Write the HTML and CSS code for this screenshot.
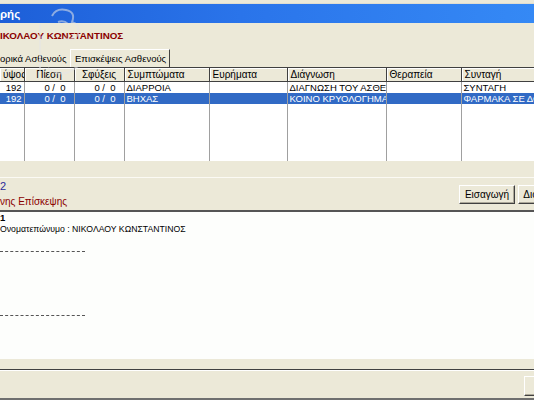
FILE: index.html
```html
<!DOCTYPE html>
<html lang="el">
<head>
<meta charset="utf-8">
<title>Επισκέψεις Ασθενούς</title>
<link rel="stylesheet" href="styles.css">
</head>
<body>
<div class="window">
  <div class="titlebar"><span class="title">ρής</span></div>
  <div class="top">
    <div class="patient">ΙΚΟΛΑΟΥ ΚΩΝΣΤΑΝΤΙΝΟΣ</div>
    <div class="tabs">
      <div class="tab">ορικά Ασθενούς</div>
      <div class="tab active">Επισκέψεις Ασθενούς</div>
    </div>
  </div>
  <div class="grid">
    <table class="visits">
      <colgroup>
        <col class="c1"><col class="c2"><col class="c3"><col class="c4"><col class="c5"><col class="c6"><col class="c7"><col class="c8">
      </colgroup>
      <thead>
        <tr>
          <th class="right">ύψος</th>
          <th class="center">Πίεση</th>
          <th class="center">Σφύξεις</th>
          <th>Συμπτώματα</th>
          <th>Ευρήματα</th>
          <th>Διάγνωση</th>
          <th>Θεραπεία</th>
          <th>Συνταγή</th>
        </tr>
      </thead>
      <tbody>
        <tr>
          <td class="right">192</td>
          <td class="num">0 /&nbsp; 0</td>
          <td class="num">0 /&nbsp; 0</td>
          <td>ΔΙΑΡΡΟΙΑ</td>
          <td></td>
          <td>ΔΙΑΓΝΩΣΗ ΤΟΥ ΑΣΘΕΝΟΥΣ</td>
          <td></td>
          <td>ΣΥΝΤΑΓΗ</td>
        </tr>
        <tr class="selected">
          <td class="right">192</td>
          <td class="num">0 /&nbsp; 0</td>
          <td class="num">0 /&nbsp; 0</td>
          <td>ΒΗΧΑΣ</td>
          <td></td>
          <td>ΚΟΙΝΟ ΚΡΥΟΛΟΓΗΜΑ</td>
          <td></td>
          <td>ΦΑΡΜΑΚΑ ΣΕ ΔΟΣΕΙΣ</td>
        </tr>
        <tr class="filler">
          <td></td><td></td><td></td><td></td><td></td><td></td><td></td><td></td>
        </tr>
      </tbody>
    </table>
  </div>
  <div class="lower">
    <div class="lower-inner">
      <div class="labels">
        <div class="count">2</div>
        <div class="caption">νης Επίσκεψης</div>
      </div>
      <div class="buttons">
        <button class="btn">Εισαγωγή</button>
        <button class="btn">Διόρθωση</button>
      </div>
    </div>
  </div>
  <div class="report">
    <div class="r-bold">1</div>
    <div class="r-line">Ονοματεπώνυμο : ΝΙΚΟΛΑΟΥ ΚΩΝΣΤΑΝΤΙΝΟΣ</div>
    <div class="dots first"></div>
    <div class="dots second"></div>
  </div>
  <div class="footer">
    <div class="footer-inner">
      <button class="btn small"></button>
    </div>
  </div>
  <svg class="watermark" width="60" height="80" viewBox="0 0 60 80">
    <path d="M6 22 L6 70" />
    <path d="M14 66 Q28 78 44 64" />
    <path d="M18 14 Q22 6 32 8 Q42 10 38 20 Q46 22 44 32 Q40 40 30 36" />
    <path d="M24 20 Q30 18 34 22" />
  </svg>
</div>
</body>
</html>
```

FILE: styles.css
```css
html, body {
  margin: 0;
  padding: 0;
}
body {
  width: 534px;
  height: 400px;
  overflow: hidden;
  background: #ece9d8;
  font-family: "Liberation Sans", Arial, sans-serif;
  font-size: 9.5px;
  color: #000;
}
.window {
  position: relative;
  width: 534px;
  height: 400px;
  display: flex;
  flex-direction: column;
  overflow: hidden;
}
.titlebar {
  margin-top: 3px;
  height: 20px;
  background: linear-gradient(to right, #1d5fd8 0%, #2a74ea 45%, #3589f5 100%);
  border-top: 1px solid #e0ddd0;
  box-sizing: border-box;
  display: flex;
  align-items: center;
}
.title {
  color: #fff;
  font-weight: bold;
  font-size: 11.5px;
}
.top {
  height: 44px;
  display: flex;
  flex-direction: column;
  justify-content: space-between;
}
.patient {
  margin-top: 7px;
  color: #8b0000;
  font-weight: bold;
  font-size: 9.8px;
  white-space: nowrap;
}
.tabs {
  display: flex;
  align-items: flex-end;
  height: 18px;
}
.tab {
  flex: none;
  height: 16px;
  line-height: 16px;
  width: 70px;
  white-space: nowrap;
  color: #000;
}
.tab.active {
  height: 18px;
  line-height: 17px;
  width: 100px;
  padding-left: 4px;
  border-left: 1px solid #fff;
  border-top: 1px solid #fff;
  border-right: 1px solid #404040;
  box-sizing: border-box;
}
.grid {
  height: 95px;
  background: #fff;
  border-top: 1px solid #404040;
  border-bottom: 1px solid #ece9d8;
  box-sizing: border-box;
  overflow: hidden;
}
.visits {
  width: 534px;
  table-layout: fixed;
  border-collapse: collapse;
  height: 94px;
}
.c1 { width: 24px; }
.c2 { width: 50px; }
.c3 { width: 50px; }
.c4 { width: 85px; }
.c5 { width: 78px; }
.c6 { width: 99px; }
.c7 { width: 75px; }
.c8 { width: 73px; }
.visits th {
  height: 13px;
  padding: 0 3px;
  font-weight: normal;
  font-size: 10px;
  text-align: left;
  background: #ece9d8;
  border-right: 1px solid #404040;
  border-bottom: 1px solid #404040;
  box-shadow: inset 1px 1px 0 #fff;
  white-space: nowrap;
  overflow: hidden;
  line-height: 12px;
}
.visits td {
  height: 11px;
  padding: 0 2px;
  line-height: 11px;
  white-space: nowrap;
  overflow: hidden;
  border-right: 1px solid #a0a0a0;
  vertical-align: middle;
}
.visits .filler td {
  height: auto;
}
.visits .right { text-align: right; }
.visits .center { text-align: center; }
.visits .num { text-align: right; padding-right: 8px; }
.visits tr.selected td {
  background: #316ac5;
  color: #fff;
}
.lower {
  height: 50px;
  padding-top: 15px;
  box-sizing: border-box;
  border-bottom: 2px solid #555;
}
.lower-inner {
  border-top: 1px solid #fbfaf4;
  height: 33px;
  display: flex;
  justify-content: space-between;
}
.labels {
  display: flex;
  flex-direction: column;
}
.count {
  color: #2b2b9a;
  font-size: 11px;
  line-height: 14px;
  margin-top: 1px;
}
.caption {
  color: #8b0000;
  font-size: 10px;
  line-height: 14px;
  margin-top: 2px;
  white-space: nowrap;
}
.buttons {
  flex: none;
  display: flex;
  gap: 3px;
  margin-top: 7px;
  margin-right: -40px;
}
.btn {
  flex: none;
  font-family: "Liberation Sans", Arial, sans-serif;
  font-size: 10px;
  height: 19px;
  width: 56px;
  padding: 0;
  background: #ece9d8;
  border: 1px solid;
  border-color: #fff #404040 #404040 #fff;
  box-shadow: inset -1px -1px 0 #aca899;
  color: #000;
  white-space: nowrap;
}
.report {
  flex: 1;
  background: #fdfefc;
  padding-top: 1px;
}
.r-bold {
  font-weight: bold;
  line-height: 9px;
  height: 9px;
  overflow: hidden;
}
.r-line {
  font-size: 8.7px;
  line-height: 12px;
  margin-top: 1px;
  white-space: nowrap;
}
.dots {
  width: 85px;
  border-top: 1px dashed #555;
}
.dots.first { margin-top: 16px; }
.dots.second { margin-top: 63px; }
.footer {
  height: 41px;
  background: #ece9d8;
  box-sizing: border-box;
  padding-top: 10px;
  border-bottom: 2px solid #6f6f6f;
}
.footer-inner {
  border-top: 1px solid #404040;
  box-shadow: 0 1px 0 #fff inset;
  height: 28px;
  display: flex;
  justify-content: flex-end;
  align-items: center;
}
.btn.small {
  width: 40px;
  height: 20px;
  margin-right: -30px;
  margin-top: 3px;
}
.watermark {
  position: absolute;
  left: 34px;
  top: 2px;
  fill: none;
  stroke: rgba(230, 230, 230, 0.55);
  stroke-width: 2;
  pointer-events: none;
}
```
